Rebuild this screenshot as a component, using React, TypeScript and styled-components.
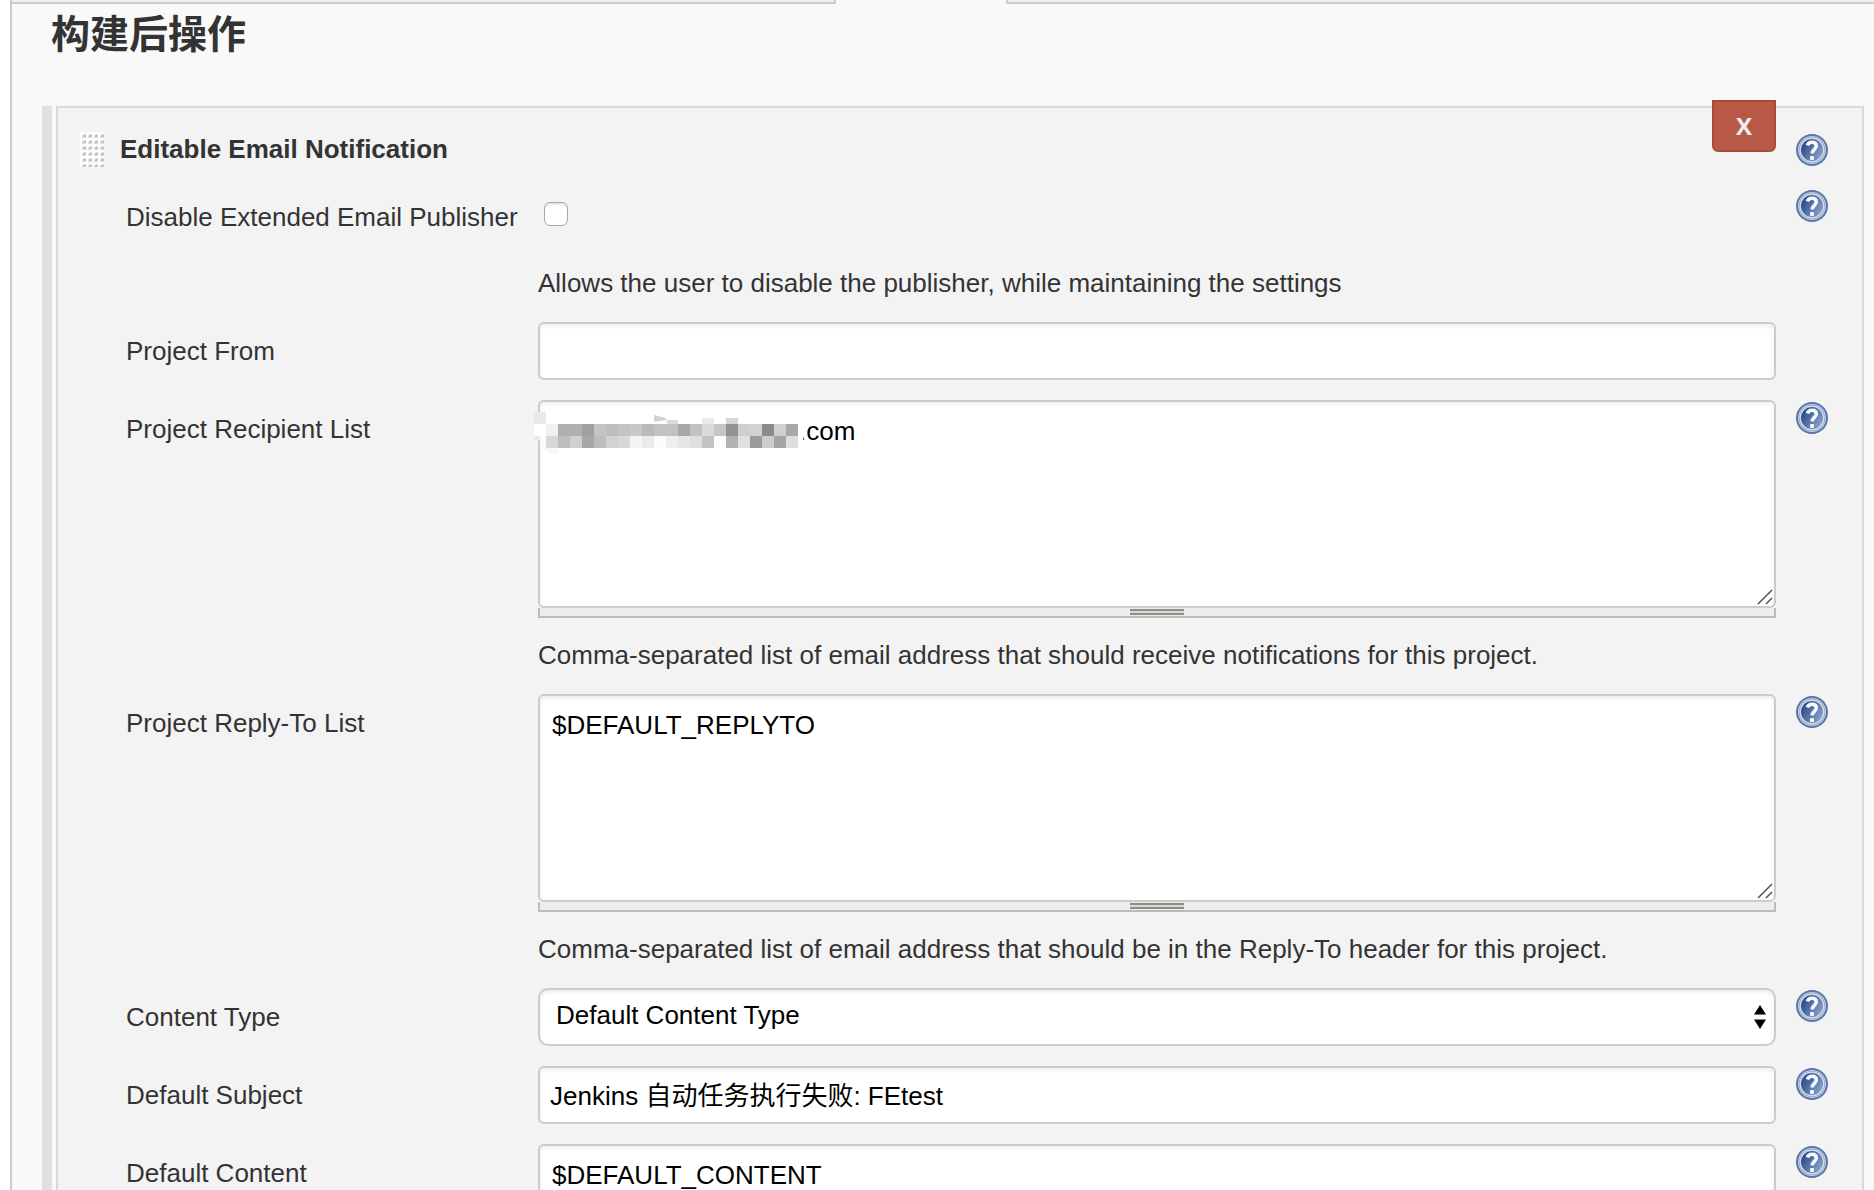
import React from 'react';
import styled, { createGlobalStyle, css } from 'styled-components';

const GlobalStyle = createGlobalStyle`
  *, *::after { box-sizing: border-box; }
  body {
    margin: 0;
    background: #fff;
    color: #333;
    font-family: "Liberation Sans", Helvetica, Arial, "Noto Sans CJK SC", sans-serif;
    font-size: 26px;
    line-height: 30px;
  }
`;

const Page = styled.main`
  height: 100vh;
  overflow: hidden;
  margin-left: 10px;
  border-left: 2px solid #ccc;
  background: #f9f9f9;
`;

const TabStrip = styled.div`
  display: flex;
  gap: 170px;
  height: 4px;
`;

const TabEdge = styled.div<{ $side: 'left' | 'right' }>`
  background: #eee;
  border-bottom: 2px solid #ccc;
  ${({ $side }) =>
    $side === 'left'
      ? css`flex: 0 0 824px; border-right: 2px solid #ccc; border-bottom-right-radius: 2px;`
      : css`flex: 1; border-left: 2px solid #ccc; border-bottom-left-radius: 2px;`}
`;

const SectionTitle = styled.h1`
  margin: 0;
  padding: 2px 0 0 39px;
  font-size: 39px;
  line-height: 58px;
  font-weight: 700;
`;

const Publisher = styled.section`
  margin: 42px 10px 0 30px;
  padding-left: 4px;
  border-left: 10px solid #e0e0e0;
`;

const Panel = styled.div`
  position: relative;
  padding: 24px 34px 20px 22px;
  border: 2px solid #d9d9d9;
  background: #f3f3f3;
`;

const RemoveButton = styled.button`
  position: absolute;
  top: -8px;
  right: 86px;
  width: 64px;
  height: 52px;
  padding: 0;
  border: 2px solid #a84b39;
  border-radius: 0 0 6px 6px;
  background: #b85947;
  color: #eee;
  font: 700 24px/30px "Open Sans", "Noto Sans", sans-serif;
`;

const Header = styled.header`
  display: flex;
  align-items: flex-start;
  gap: 16px;
  height: 36px;
  margin-bottom: 20px;
`;

const PublisherName = styled.h2`
  flex: 1;
  margin: 0;
  padding-top: 2px;
  font-size: 26px;
  line-height: 30px;
`;

const Row = styled.div`
  display: grid;
  grid-template-columns: 412px minmax(0, 1fr) 52px;
  margin: 0 0 20px 46px;
`;

const Label = styled.label`
  padding-top: 14px;
`;

const Field = styled.div`
  min-height: 44px;
`;

const HelpSlot = styled.div`
  display: flex;
  justify-content: flex-end;
  align-items: flex-start;
  padding-top: 2px;
`;

const HelpButton = styled.button`
  display: block;
  width: 32px;
  height: 32px;
  padding: 0;
  border: 0;
  background: none;
`;

const HelpText = styled.p`
  margin: 0;
  padding: 22px 0 4px;
`;

const controlStyle = css`
  display: block;
  width: 100%;
  margin: 0;
  border: 2px solid #ccc;
  border-radius: 6px;
  background: #fff;
  box-shadow: inset 0 2px 4px rgba(0, 0, 0, 0.08);
  color: #000;
  font: inherit;
  outline: none;
`;

const TextInput = styled.input`
  ${controlStyle}
  height: 58px;
  padding: 0 10px 4px;
`;

const TextArea = styled.textarea<{ $indent?: number }>`
  ${controlStyle}
  height: 208px;
  padding: 14px 12px;
  resize: none;
  overflow: hidden;
  text-indent: ${({ $indent }) => $indent ?? 0}px;
`;

const TextAreaFrame = styled.div`
  position: relative;
`;

const Grabber = styled.svg`
  position: absolute;
  right: 3px;
  bottom: 3px;
`;

const Mosaic = styled.svg`
  position: absolute;
  top: 12px;
  left: -4px;
`;

const DragBar = styled.div`
  display: flex;
  justify-content: center;
  height: 10px;
  border: 2px solid #bdbdb8;
  border-top: 0;
  background: #ededed;
  &::after {
    content: "";
    width: 54px;
    height: 6px;
    margin-top: 1px;
    border: solid #8e8d86;
    border-width: 2px 0;
    background: #d8d8d4;
  }
`;

const SelectFrame = styled.div`
  position: relative;
`;

const Select = styled.select`
  ${controlStyle}
  height: 58px;
  padding: 0 40px 4px 16px;
  border-radius: 10px;
  appearance: none;
`;

const SelectArrows = styled.svg`
  position: absolute;
  top: 17px;
  right: 10px;
  pointer-events: none;
`;

const Checkbox = styled.input`
  display: block;
  appearance: none;
  width: 24px;
  height: 24px;
  margin: 14px 0 0 6px;
  border: 1px solid #aaa;
  border-radius: 6px;
  background: #fff;
  box-shadow: inset 0 2px 2px rgba(0, 0, 0, 0.1);
`;

function Grip() {
  return (
    <svg width="24" height="35" aria-hidden="true">
      <defs>
        <pattern id="dots" width="6" height="6" patternUnits="userSpaceOnUse">
          <rect width="6" height="6" fill="#fcfcfc" />
          <path d="M2 6V4l2-2h2v4z" fill="#deded9" />
          <rect x="3" y="3" width="3" height="2" fill="#c4c4be" />
        </pattern>
      </defs>
      <rect width="24" height="35" fill="url(#dots)" />
    </svg>
  );
}

function Help({ topic }: { topic: string }) {
  return (
    <HelpButton type="button" aria-label={`Help for feature: ${topic}`}>
      <svg width="32" height="32" viewBox="0 0 32 32" aria-hidden="true">
        <defs>
          <linearGradient id="helpFill" x1="0" y1="0.2" x2="1" y2="0.8">
            <stop offset="0.1" stopColor="#2f4f8c" />
            <stop offset="1" stopColor="#8ba6cf" />
          </linearGradient>
        </defs>
        <circle cx="16" cy="16" r="16" fill="#5a75a8" />
        <circle cx="16" cy="16" r="14" fill="#c3cfe2" />
        <circle cx="16" cy="16" r="13" fill="#8097c0" />
        <circle cx="16" cy="16" r="12.500" fill="#d3dcea" />
        <circle cx="16" cy="16" r="11" fill="url(#helpFill)" />
        <path d="M11.500 11.500c.6-2.400 2.400-3.200 4.500-3.200 2.600 0 4.300 1.300 4.300 3.700 0 3.300-4.100 3.600-4.100 7.500" fill="none" stroke="#f4f7fb" strokeWidth="3.600" />
        <rect x="14" y="22" width="4" height="4" rx="1" fill="#f4f7fb" />
      </svg>
    </HelpButton>
  );
}

const mosaicTop = ['', 'f0f0f0', 'b0b0b0', 'b0b0b0', 'a0a0a0', 'c4c4c4', 'bebebe', 'c4c4c4', 'c8c8c8', 'bababa', 'c2c2c2', 'c2c2c2', 'a9a9a9', 'c2c2c2', 'dadada', 'c6c6c6', '929292', 'cfcfcf', 'd2d2d2', '8b8b8b', 'd0d0d0', 'a8a8a8'];
const mosaicBottom = ['e9e9e9', 'd8d8d8', 'bebebe', 'd0d0d0', 'a6a6a6', 'bcbcbc', 'd2d2d2', 'd8d8d8', 'f4f4f4', 'eaeaea', 'fbfbfb', 'eeeeee', 'e6e6e6', 'e0e0e0', 'c3c3c3', 'fcfcfc', 'b2b2b2', 'e0e0e0', '9b9b9b', 'cdcdcd', 'a4a4a4', 'dedede'];

function MaskedAddress() {
  return (
    <Mosaic width="270" height="42" aria-hidden="true">
      <rect width="12" height="12" fill="#e9e9e9" />
      <rect y="12" width="12" height="12" fill="#fff" />
      <path d="M6 30h18v12h-6q-9-1-12-12" fill="#f8f8f8" />
      <path d="M120 3l12 3v2l-12 2z" fill="#d2d2d2" />
      <path d="M132 8h12v4h-10z" fill="#dadada" />
      <rect x="168" y="6" width="12" height="6" fill="#e9e9e9" />
      <rect x="192" y="6" width="12" height="6" fill="#d6d6d6" />
      {mosaicTop.map((c, i) => c && <rect key={i} x={i * 12} y="12" width="12" height="12" fill={`#${c}`} />)}
      {mosaicBottom.map((c, i) => <rect key={i} x={i * 12} y="24" width={i ? 12 : 6} height={i ? 12 : 4} fill={`#${c}`} />)}
      <path d="M6 24q1-8 6-12H6z" fill="#fff" />
      <path d="M264 12h6v10l-2 14h-4z" fill="#fff" />
    </Mosaic>
  );
}

interface AreaProps {
  id: string;
  value: string;
  masked?: boolean;
}

function ResizableArea({ id, value, masked }: AreaProps) {
  return (
    <>
      <TextAreaFrame>
        <TextArea id={id} defaultValue={value} $indent={masked ? 247 : 0} spellCheck={false} />
        {masked && <MaskedAddress />}
        <Grabber width="16" height="16" aria-hidden="true">
          <path d="M1 15L15 1M9 15l6-6" stroke="#555" strokeWidth="1.500" />
        </Grabber>
      </TextAreaFrame>
      <DragBar />
    </>
  );
}

interface FormRowProps {
  id: string;
  label: string;
  help?: boolean;
  note?: string;
  children: React.ReactNode;
}

function FormRow({ id, label, help = true, note, children }: FormRowProps) {
  return (
    <Row>
      <Label htmlFor={id}>{label}</Label>
      <div>
        <Field>{children}</Field>
        {note && <HelpText>{note}</HelpText>}
      </div>
      <HelpSlot>{help && <Help topic={label} />}</HelpSlot>
    </Row>
  );
}

export default function App() {
  return (
    <>
      <GlobalStyle />
      <Page>
        <TabStrip>
          <TabEdge $side="left" />
          <TabEdge $side="right" />
        </TabStrip>
        <SectionTitle>构建后操作</SectionTitle>
        <Publisher>
          <Panel>
            <RemoveButton type="button">X</RemoveButton>
            <Header>
              <Grip />
              <PublisherName>Editable Email Notification</PublisherName>
              <HelpSlot>
                <Help topic="Editable Email Notification" />
              </HelpSlot>
            </Header>
            <FormRow id="disabled" label="Disable Extended Email Publisher" note="Allows the user to disable the publisher, while maintaining the settings">
              <Checkbox id="disabled" type="checkbox" />
            </FormRow>
            <FormRow id="from" label="Project From" help={false}>
              <TextInput id="from" type="text" />
            </FormRow>
            <FormRow id="recipients" label="Project Recipient List" note="Comma-separated list of email address that should receive notifications for this project.">
              <ResizableArea id="recipients" value=".com" masked />
            </FormRow>
            <FormRow id="replyto" label="Project Reply-To List" note="Comma-separated list of email address that should be in the Reply-To header for this project.">
              <ResizableArea id="replyto" value="$DEFAULT_REPLYTO" />
            </FormRow>
            <FormRow id="contentType" label="Content Type">
              <SelectFrame>
                <Select id="contentType">
                  <option>Default Content Type</option>
                </Select>
                <SelectArrows width="12" height="24" aria-hidden="true">
                  <path d="M6 0l6 9.500H0zM6 24l6-9.500H0z" fill="#000" />
                </SelectArrows>
              </SelectFrame>
            </FormRow>
            <FormRow id="subject" label="Default Subject">
              <TextInput id="subject" type="text" defaultValue="Jenkins 自动任务执行失败: FEtest" spellCheck={false} />
            </FormRow>
            <FormRow id="content" label="Default Content">
              <ResizableArea id="content" value="$DEFAULT_CONTENT" />
            </FormRow>
          </Panel>
        </Publisher>
      </Page>
    </>
  );
}
